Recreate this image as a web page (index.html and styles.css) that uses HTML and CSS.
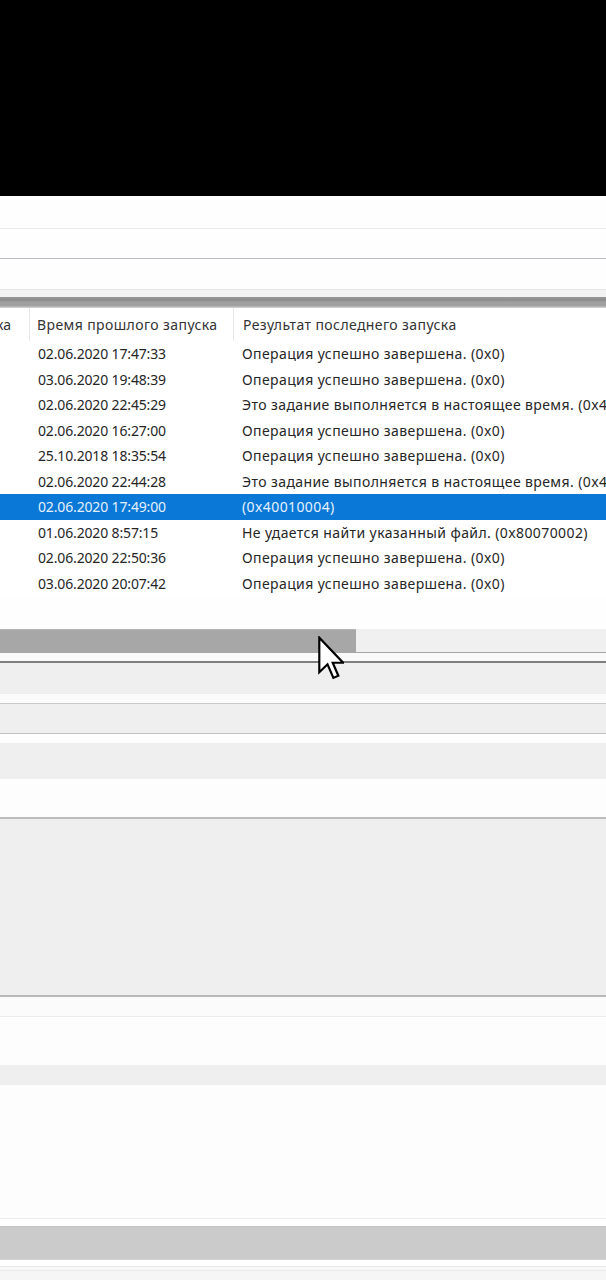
FILE: index.html
```html
<!DOCTYPE html>
<html lang="ru">
<head>
<meta charset="utf-8">
<title>Планировщик заданий</title>
<link rel="stylesheet" href="styles.css">
</head>
<body>
<div class="screen">
  <div class="black"></div>
  <div class="bar bar1"></div>
  <div class="bar bar2"></div>
  <div class="bar bar3"></div>
  <div class="gap-light"></div>
  <div class="shadow"></div>

  <div class="table">
    <div class="row head">
      <div class="cell c1"><span>ка</span></div>
      <div class="cell c2">Время прошлого запуска</div>
      <div class="cell c3">Результат последнего запуска</div>
    </div>
    <div class="row"><div class="cell c1"></div><div class="cell c2">02.06.2020 17:47:33</div><div class="cell c3">Операция успешно завершена. (0x0)</div></div>
    <div class="row"><div class="cell c1"></div><div class="cell c2">03.06.2020 19:48:39</div><div class="cell c3">Операция успешно завершена. (0x0)</div></div>
    <div class="row"><div class="cell c1"></div><div class="cell c2">02.06.2020 22:45:29</div><div class="cell c3">Это задание выполняется в настоящее время. (0x41301)</div></div>
    <div class="row"><div class="cell c1"></div><div class="cell c2">02.06.2020 16:27:00</div><div class="cell c3">Операция успешно завершена. (0x0)</div></div>
    <div class="row"><div class="cell c1"></div><div class="cell c2">25.10.2018 18:35:54</div><div class="cell c3">Операция успешно завершена. (0x0)</div></div>
    <div class="row"><div class="cell c1"></div><div class="cell c2">02.06.2020 22:44:28</div><div class="cell c3">Это задание выполняется в настоящее время. (0x41301)</div></div>
    <div class="row selected"><div class="cell c1"></div><div class="cell c2">02.06.2020 17:49:00</div><div class="cell c3">(0x40010004)</div></div>
    <div class="row"><div class="cell c1"></div><div class="cell c2">01.06.2020 8:57:15</div><div class="cell c3">Не удается найти указанный файл. (0x80070002)</div></div>
    <div class="row"><div class="cell c1"></div><div class="cell c2">02.06.2020 22:50:36</div><div class="cell c3">Операция успешно завершена. (0x0)</div></div>
    <div class="row"><div class="cell c1"></div><div class="cell c2">03.06.2020 20:07:42</div><div class="cell c3">Операция успешно завершена. (0x0)</div></div>
  </div>
  <div class="table-rest"></div>

  <div class="hscroll"><div class="thumb"></div></div>
  <div class="band b-white1"></div>
  <div class="band b-dark-line"></div>
  <div class="band b-gray1"></div>
  <div class="band b-white2"></div>
  <div class="band b-gray2"></div>
  <div class="band b-white3"></div>
  <div class="band b-gray3"></div>
  <div class="band b-white4"></div>
  <div class="band b-panel"></div>
  <div class="band b-white5"></div>
  <div class="band b-white6"></div>
  <div class="band b-gray4"></div>
  <div class="band b-white7"></div>
  <div class="band b-white8"></div>
  <div class="band b-status"></div>
  <div class="band b-white9"></div>
  <div class="band b-bottom"></div>

  <svg class="cursor" viewBox="0 0 12 20" width="26" height="44" aria-hidden="true">
    <path d="M0.6,0.6 L0.6,16.6 L4.4,12.9 L7.1,19.2 L9.4,18.2 L6.8,12.2 L11.6,12.2 Z" fill="#ffffff" stroke="#000000" stroke-width="1" stroke-linejoin="miter"/>
  </svg>
</div>
</body>
</html>
```
FILE: styles.css
```css
* { box-sizing: border-box; }
html, body { margin: 0; padding: 0; }
body {
  background: #fdfdfd;
  font-family: "Noto Sans", "Open Sans", "DejaVu Sans", sans-serif;
  color: #262626;
  overflow: hidden;
}
.screen {
  position: relative;
  width: 606px;
  height: 1280px;
  overflow: hidden;
  display: flex;
  flex-direction: column;
}
.black { height: 196px; background: #000; flex: none; }
.bar { flex: none; background: #fefefe; }
.bar1 { height: 33px; border-bottom: 1px solid #e9e9e9; }
.bar2 { height: 30px; border-bottom: 1px solid #b7bac2; }
.bar3 { height: 31px; border-bottom: 1px solid #e6e6e6; }
.gap-light { height: 7px; background: #f3f3f3; flex: none; }
.shadow {
  height: 11px;
  flex: none;
  background: linear-gradient(#9a9a9a, #8c8c8c 25%, #a4a4a4 55%, #9c9c9c 75%, #d6d6d6);
}

.table { flex: none; background: #ffffff; }
.row {
  display: flex;
  height: 25.5px;
  align-items: center;
  font-size: 14px;
  white-space: nowrap;
}
.row.head { height: 33px; color: #333; background: #fff; }
.cell { overflow: hidden; flex: none; }
.c1 { width: 30px; }
.c2 { width: 203px; padding-left: 8px; letter-spacing: -0.15px; }
.c3 { flex: 1; padding-left: 9px; overflow: hidden; letter-spacing: 0.4px; }
.head .cell { height: 100%; display: flex; align-items: center; }
.head .c1 {
  justify-content: flex-end;
  padding-right: 18px;
  border-right: 1px solid #e8e8e8;
}
.head .c2 {
  border-right: 1px solid #e8e8e8;
  width: 204px;
  padding-left: 7px;
  letter-spacing: 0.4px;
}
.row.selected { background: #0a78d6; color: #e4f0fb; }

.table-rest { height: 33px; flex: none; background: #fefefe; }

.hscroll {
  height: 24px;
  flex: none;
  background: #f0f0f0;
  border-bottom: 1px solid #a6a6a6;
  display: flex;
}
.thumb { width: 356px; height: 100%; background: #a7a7a7; border-top: 1px solid #b4b4b4; }

.band { flex: none; }
.b-white1 { height: 8px; background: #f9f9f9; }
.b-dark-line { height: 2px; background: #7e7e7e; }
.b-gray1 { height: 31px; background: #efefef; }
.b-white2 { height: 10px; background: #fbfbfb; border-bottom: 1px solid #c9c9c9; }
.b-gray2 { height: 30px; background: #efefef; border-bottom: 1px solid #c2c2c2; }
.b-white3 { height: 9px; background: #fdfdfd; }
.b-gray3 { height: 36px; background: #efefef; }
.b-white4 { height: 40px; background: #fdfdfd; border-bottom: 2px solid #bcbcbc; }
.b-panel { height: 178px; background: #efefef; border-bottom: 2px solid #b8b8b8; }
.b-white5 { height: 20px; background: #fbfbfb; border-bottom: 1px solid #ebebeb; }
.b-white6 { height: 48px; background: #fdfdfd; }
.b-gray4 { height: 20px; background: #efefef; }
.b-white7 { height: 134px; background: #fdfdfd; border-bottom: 1px solid #ececec; }
.b-white8 { height: 8px; background: #ffffff; border-bottom: 1px solid #c4c4c4; }
.b-status { height: 32px; background: #cbcbcb; }
.b-white9 { height: 7px; background: #ffffff; border-top: 1px solid #d4d4d4; }
.b-bottom {
  height: 20px;
  background: linear-gradient(#e8e8e8 0, #e8e8e8 1px, #f8f8f8 1px, #f8f8f8 4px, #ebebeb 4px, #ebebeb 5px, #f6f6f6 5px);
}

.cursor {
  position: absolute;
  left: 318px;
  top: 636px;
}
```
